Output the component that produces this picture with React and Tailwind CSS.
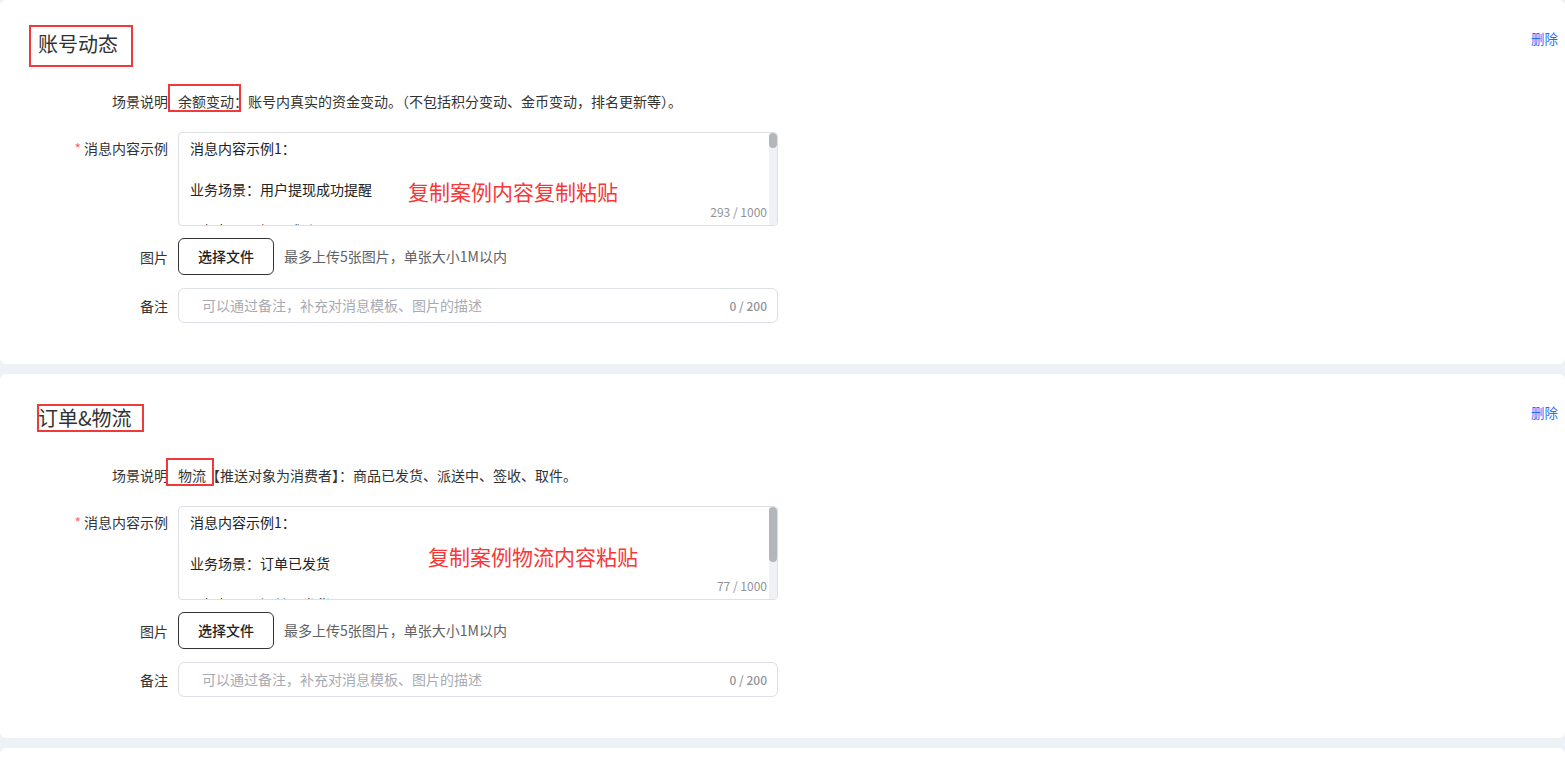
import React from 'react';

const scenes = [
  {
    title: '账号动态',
    titleBox: 'left-[-9px] top-[-5px] h-[42px] w-[104px]',
    tag: '余额变动：',
    tagBox: 'left-[-10px] w-[73px]',
    desc: '账号内真实的资金变动。（不包括积分变动、金币变动，排名更新等）。',
    lines: ['消息内容示例1：', '', '业务场景：用户提现成功提醒', '', '通知标题：提现成功'],
    count: '293 / 1000',
    hint: '复制案例内容复制粘贴',
    hintPos: 'left-[229px] top-[44px]',
    thumb: 'h-[15px]',
  },
  {
    title: '订单&物流',
    titleBox: 'left-[-1px] top-0 h-[28px] w-[107px]',
    tag: '物流',
    tagBox: 'left-[-12px] w-[48px]',
    desc: '【推送对象为消费者】：商品已发货、派送中、签收、取件。',
    lines: ['消息内容示例1：', '', '业务场景：订单已发货', '', '通知标题：订单已发货'],
    count: '77 / 1000',
    hint: '复制案例物流内容粘贴',
    hintPos: 'left-[249px] top-[35px]',
    thumb: 'h-[55px]',
  },
];

const Label = ({ required, children }) => (
  <div className="w-[130px] shrink-0 text-right text-[14px] leading-[22px] text-[#333]">
    {required && <span className="mr-[3px] text-[#f56c6c]">*</span>}
    {children}
  </div>
);

const SceneCard = ({ scene }) => (
  <div className="relative rounded-[6px] bg-white pt-[30px] pb-[41px] pl-[38px]">
    <a className="absolute right-[7px] top-[28px] cursor-pointer text-[13.5px] leading-[20px] text-[#1e6fff]">删除</a>

    <div className="relative h-[28px] w-fit">
      <h2 className="text-[20px] leading-[28px] text-[#303133]">{scene.title}</h2>
      <span className={`absolute border-2 border-[#f03a3a] ${scene.titleBox}`} />
    </div>

    <div className="mt-[32px] flex">
      <Label>场景说明</Label>
      <div className="relative ml-[10px] text-[14px] leading-[22px] text-[#333]">
        <span>{scene.tag}</span>
        <span>{scene.desc}</span>
        <span className={`absolute top-[-6px] h-[28px] border-2 border-[#f03a3a] ${scene.tagBox}`} />
      </div>
    </div>

    <div className="mt-[20px] flex">
      <div className="pt-[5px]">
        <Label required>消息内容示例</Label>
      </div>
      <div className="relative ml-[10px] h-[94px] w-[600px] overflow-hidden rounded-[4px] border border-[#dcdfe6] bg-white">
        <div className="pl-[11px] pt-[5px] text-[14px] leading-[20.5px] text-[#222]">
          {scene.lines.map((l, i) => (
            <div key={i} className="h-[20.5px]">{l}</div>
          ))}
        </div>
        <div className={`absolute text-[21px] leading-[28px] text-[#f53838] ${scene.hintPos}`}>{scene.hint}</div>
        <div className="absolute bottom-[5px] right-[10px] text-[12px] leading-[16px] text-[#909399]">{scene.count}</div>
        <div className="absolute right-0 top-0 h-full w-[8px] bg-[#f0f1f4]">
          <div className={`w-[8px] rounded-[4px] bg-[#b4b7ba] ${scene.thumb}`} />
        </div>
      </div>
    </div>

    <div className="mt-[12px] flex items-center">
      <Label>图片</Label>
      <button className="ml-[10px] h-[37px] w-[96px] rounded-[6px] border border-[#333] bg-white text-[14px] font-medium text-[#222]">
        选择文件
      </button>
      <span className="ml-[10px] text-[14px] text-[#606266]">最多上传5张图片，单张大小1M以内</span>
    </div>

    <div className="mt-[13px] flex items-center">
      <Label>备注</Label>
      <div className="ml-[10px] flex h-[35px] w-[600px] items-center justify-between rounded-[6px] border border-[#dcdfe6] pl-[23px] pr-[10px]">
        <span className="text-[14px] text-[#a8abb2]">可以通过备注，补充对消息模板、图片的描述</span>
        <span className="text-[12px] font-medium text-[#909399]">0 / 200</span>
      </div>
    </div>
  </div>
);

export default function App() {
  return (
    <div className="h-[758px] overflow-hidden bg-[#eef1f5] font-['Noto_Sans_CJK_SC','Noto_Sans',sans-serif]">
      <div className="flex flex-col gap-[10px]">
        {scenes.map(s => (
          <SceneCard key={s.title} scene={s} />
        ))}
        <div className="h-[40px] rounded-[6px] bg-white" />
      </div>
    </div>
  );
}
